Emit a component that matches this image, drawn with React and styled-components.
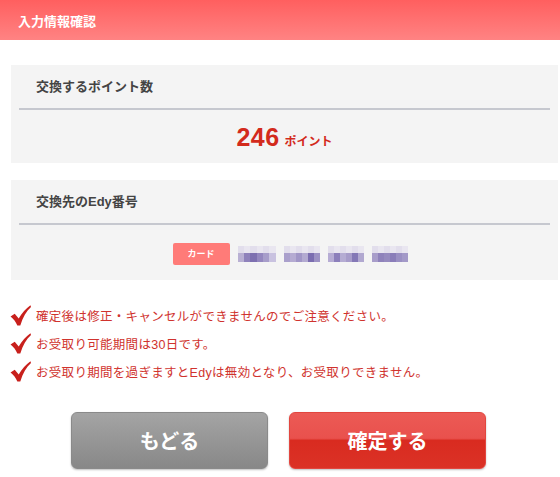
import styled, { createGlobalStyle } from "styled-components";

const GlobalStyle = createGlobalStyle`
  body {
    margin: 0;
    background: #fff;
    font-family: "Liberation Sans", "Noto Sans CJK JP", sans-serif;
  }
`;

const Page = styled.div`
  width: 560px;
  height: 477px;
  overflow: hidden;
`;

const Header = styled.header`
  height: 40px;
  display: flex;
  align-items: center;
  padding-left: 18px;
  background: linear-gradient(#ff5f5f, #ff8383);
  color: #fff;
  font-size: 13px;
  font-weight: bold;
`;

const Panel = styled.section`
  margin: ${(p) => p.$top}px 2px 0 11px;
  background: #f4f4f4;
  padding: 0 8px;
  height: ${(p) => p.$height}px;
  display: flex;
  flex-direction: column;
`;

const PanelTitle = styled.h2`
  margin: 0;
  height: 45px;
  display: flex;
  align-items: center;
  padding: 0 0 3px 17px;
  font-size: 13px;
  font-weight: bold;
  color: #444;
  border-bottom: 2px solid #c6c8cf;
  box-sizing: border-box;
`;

const PanelBody = styled.div`
  flex: 1;
  display: flex;
  align-items: center;
  justify-content: center;
  gap: ${(p) => p.$gap || 0}px;
  padding: 2px 0 0 ${(p) => p.$shift || 0}px;
`;

const Amount = styled.span`
  color: #d32a1c;
  font-size: 25px;
  font-weight: bold;
  letter-spacing: 0.5px;
`;

const Unit = styled.span`
  color: #d32a1c;
  font-size: 12px;
  font-weight: bold;
  margin-left: 5px;
  margin-top: 5px;
`;

const Badge = styled.span`
  width: 57px;
  height: 22px;
  border-radius: 2px;
  background: #ff7b78;
  color: #fff;
  font-size: 9px;
  font-weight: bold;
  display: flex;
  align-items: center;
  justify-content: center;
`;

const Masked = styled.span`
  width: ${(p) => p.$width}px;
  height: 16px;
  display: grid;
  grid-template-columns: repeat(6, 1fr);
  grid-template-rows: 7px 9px;
`;

const Cell = styled.span`
  background: ${(p) => p.$color};
`;

const Notes = styled.ul`
  list-style: none;
  margin: 25px 0 0 0;
  padding: 0 0 0 10px;
  display: flex;
  flex-direction: column;
  gap: 8px;
`;

const Note = styled.li`
  display: flex;
  align-items: center;
  gap: 5px;
  height: 20px;
  color: #d0332e;
  font-size: 12.5px;
  letter-spacing: 0.3px;
`;

const Actions = styled.div`
  display: flex;
  justify-content: center;
  gap: 21px;
  margin-top: 31px;
  padding-right: 3px;
`;

const Button = styled.button`
  width: 197px;
  height: 57px;
  border-radius: 6px;
  font-family: "Noto Sans CJK JP", sans-serif;
  font-size: 20px;
  font-weight: bold;
  color: #fff;
  cursor: pointer;
  border: 1px solid ${(p) => (p.$primary ? "#e2463f" : "#8a8a8a")};
  background: ${(p) =>
    p.$primary
      ? "linear-gradient(#ec5a55 0%, #e9514d 46%, #d92b20 50%, #db3226 100%)"
      : "linear-gradient(#a4a4a4, #888888)"};
  box-shadow: 0 1px 2px rgba(0, 0, 0, 0.25);
`;

const Check = () => (
  <svg width="21" height="21" viewBox="0 0 20 20">
    <path
      d="M0.5 11 L4.5 8.3 L8.3 12.8 C11.5 7.5 15 3.5 19.5 0.3 L20 2 C15.5 6 12.2 12 9.8 19.6 L7 19.6 C5.5 16.2 3.5 13.3 0.5 11 Z"
      fill="#c8201c"
    />
  </svg>
);

const masks = [
  { width: 38, bottom: ["#b9b0d3", "#8f82bb", "#7d6fb0", "#9487bf", "#a79dca", "#c9c2e0"] },
  { width: 36, bottom: ["#aaa0cc", "#b5abd2", "#a196c7", "#b3aad1", "#7b6db0", "#9c91c4"] },
  { width: 36, bottom: ["#b6acd4", "#8c7fbb", "#b5acd3", "#a79cca", "#8478b6", "#b1a8d0"] },
  { width: 36, bottom: ["#a89dca", "#8f82bb", "#968abf", "#8a7db9", "#9a8fc3", "#a399c8"] },
];

const notes = [
  "確定後は修正・キャンセルができませんのでご注意ください。",
  "お受取り可能期間は30日です。",
  "お受取り期間を過ぎますとEdyは無効となり、お受取りできません。",
];

const App = () => {
  return (
    <Page>
      <GlobalStyle />
      <Header>入力情報確認</Header>

      <Panel $top={25} $height={98}>
        <PanelTitle>交換するポイント数</PanelTitle>
        <PanelBody>
          <Amount>246</Amount>
          <Unit>ポイント</Unit>
        </PanelBody>
      </Panel>

      <Panel $top={17} $height={100}>
        <PanelTitle>交換先のEdy番号</PanelTitle>
        <PanelBody $gap={8} $shift={11}>
          <Badge>カード</Badge>
          {masks.map((m, i) => (
            <Masked key={i} $width={m.width}>
              {m.bottom.map((c, j) => (
                <Cell key={"t" + j} $color={j % 2 ? "#e9e6f0" : "#e2deec"} />
              ))}
              {m.bottom.map((c, j) => (
                <Cell key={"b" + j} $color={c} />
              ))}
            </Masked>
          ))}
        </PanelBody>
      </Panel>

      <Notes>
        {notes.map((n, i) => (
          <Note key={i}>
            <Check />
            {n}
          </Note>
        ))}
      </Notes>

      <Actions>
        <Button>もどる</Button>
        <Button $primary>確定する</Button>
      </Actions>
    </Page>
  );
};

export default App;
